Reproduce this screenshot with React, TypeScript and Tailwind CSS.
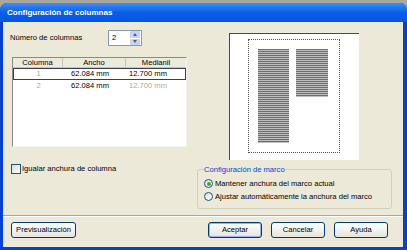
const ui = "font-['Liberation_Sans',Arial,sans-serif] text-[7.6px] leading-none text-black";

function XpButton({ label, def = false, w }: { label: string; def?: boolean; w: string }) {
  return (
    <div
      className={`${w} h-[16px] rounded-[3px] border border-[#003c74] bg-gradient-to-b from-white to-[#e6e4dc] flex items-center justify-center ${
        def ? "shadow-[inset_0_0_0_1px_#98b4ee]" : ""
      }`}
    >
      {label}
    </div>
  );
}

function Radio({ checked, label }: { checked?: boolean; label: string }) {
  return (
    <div className="flex items-center h-[10px]">
      <div className="w-[9px] h-[9px] rounded-full border border-[#1c5180] bg-gradient-to-br from-[#dcdcd7] to-white flex items-center justify-center">
        {checked && <div className="w-[4px] h-[4px] rounded-full bg-[#3fa33f]" />}
      </div>
      <span className="ml-[2px]">{label}</span>
    </div>
  );
}

function ColumnTable() {
  const rows = [
    { n: "1", ancho: "62.084 mm", med: "12.700 mm", sel: true },
    { n: "2", ancho: "62.084 mm", med: "12.700 mm", sel: false },
  ];
  return (
    <div className="mt-[11px] ml-[2px] w-[175px] h-[90px] bg-white border-t border-l border-[#8a8a8a] border-r border-b border-r-[#f4f3ee] border-b-[#f4f3ee] flex flex-col">
      <div className="flex h-[10px] bg-[#ebeadb] border-b border-[#c7c5b2]">
        <div className="w-[50px] flex items-center justify-center border-r border-[#c7c5b2]">Columna</div>
        <div className="w-[63px] flex items-center justify-center border-r border-[#c7c5b2]">Ancho</div>
        <div className="flex-1 flex items-center justify-center">Medianil</div>
      </div>
      {rows.map((r) => (
        <div
          key={r.n}
          className={`flex h-[12px] items-center ${r.sel ? "border border-[#3c3c5c]" : "border border-transparent"}`}
        >
          <div className="w-[49px] text-center text-[#aca899]">{r.n}</div>
          <div className="w-[63px] pl-[8px]">{r.ancho}</div>
          <div className={`flex-1 pl-[3px] ${r.sel ? "" : "text-[#aca899]"}`}>{r.med}</div>
        </div>
      ))}
    </div>
  );
}

function PagePreview() {
  const lines =
    "bg-[repeating-linear-gradient(to_bottom,#6e6e6e_0px,#6e6e6e_1px,#bdbdbd_1px,#bdbdbd_2px)]";
  return (
    <div className="mt-[11px] ml-[32px] w-[130px] h-[127px] bg-white border-t border-l border-[#4a4a4a] pt-[5px] pl-[18px]">
      <div className="w-[92px] h-[114px] border border-dotted border-[#555] flex gap-[7px] pt-[9px] pl-[9px]">
        <div className={`w-[31px] h-[94px] ${lines}`} />
        <div className={`w-[32px] h-[48px] ${lines}`} />
      </div>
    </div>
  );
}

export default function App() {
  return (
    <div className={`w-[407px] h-[250px] bg-[#aaa89d] flex flex-col ${ui}`}>
      <div className="mt-[3px] flex-1 flex flex-col rounded-t-[7px] overflow-hidden bg-[#0a3fd4]">
        <div className="h-[19px] shrink-0 bg-gradient-to-b from-[#3d8ef6] via-[#0a5de6] to-[#0656e2] flex items-center pl-[7px]">
          <span className="text-white font-bold text-[8px]">Configuración de columnas</span>
        </div>
        <div className="flex-1 ml-[3px] mr-[4px] mb-[3px] bg-[#ece9d8] flex flex-col">
          <div className="h-[190px] flex">
            <div className="w-[187px] pl-[7px] pt-[8px] flex flex-col">
              <div className="flex h-[16px] items-center">
                <span className="w-[98px]">Número de columnas</span>
                <div className="w-[34px] h-[16px] bg-white border border-[#7f9db9] flex items-center pl-[3px]">
                  <span className="flex-1">2</span>
                  <div className="w-[10px] h-[14px] mr-[1px] flex flex-col gap-px">
                    <div className="flex-1 rounded-[1px] bg-[#c6d3f7] flex items-center justify-center">
                      <div className="w-0 h-0 border-x-[2px] border-x-transparent border-b-[3px] border-b-[#4d6185]" />
                    </div>
                    <div className="flex-1 rounded-[1px] bg-[#c6d3f7] flex items-center justify-center">
                      <div className="w-0 h-0 border-x-[2px] border-x-transparent border-t-[3px] border-t-[#4d6185]" />
                    </div>
                  </div>
                </div>
              </div>
              <ColumnTable />
              <div className="mt-[17px] ml-[1px] h-[10px] flex items-center">
                <div className="w-[10px] h-[10px] border border-[#1c5180] bg-gradient-to-br from-[#dcdcd7] to-white" />
                <span className="ml-[1px]">Igualar anchura de columna</span>
              </div>
            </div>
            <div className="flex-1 pl-[7px] flex flex-col">
              <PagePreview />
              <fieldset className="mt-[6px] w-[195px] h-[43px] border border-[#d0d0bf] rounded-[3px] pl-[6px] pt-[5px]">
                <legend className="px-0 text-[#0046d5] mr-[2px]">Configuración de marco</legend>
                <div className="flex flex-col gap-[3px]">
                  <Radio checked label="Mantener anchura del marco actual" />
                  <Radio label="Ajustar automáticamente la anchura del marco" />
                </div>
              </fieldset>
            </div>
          </div>
          <div className="mt-[3px] h-[2px] border-t border-[#aca899] border-b border-b-white" />
          <div className="mt-[5px] h-[16px] flex">
            <div className="ml-[8px]">
              <XpButton label="Previsualización" w="w-[65px]" />
            </div>
            <div className="ml-[132px] flex gap-[9px]">
              <XpButton label="Aceptar" def w="w-[54px]" />
              <XpButton label="Cancelar" w="w-[54px]" />
              <XpButton label="Ayuda" w="w-[54px]" />
            </div>
          </div>
        </div>
      </div>
    </div>
  );
}
